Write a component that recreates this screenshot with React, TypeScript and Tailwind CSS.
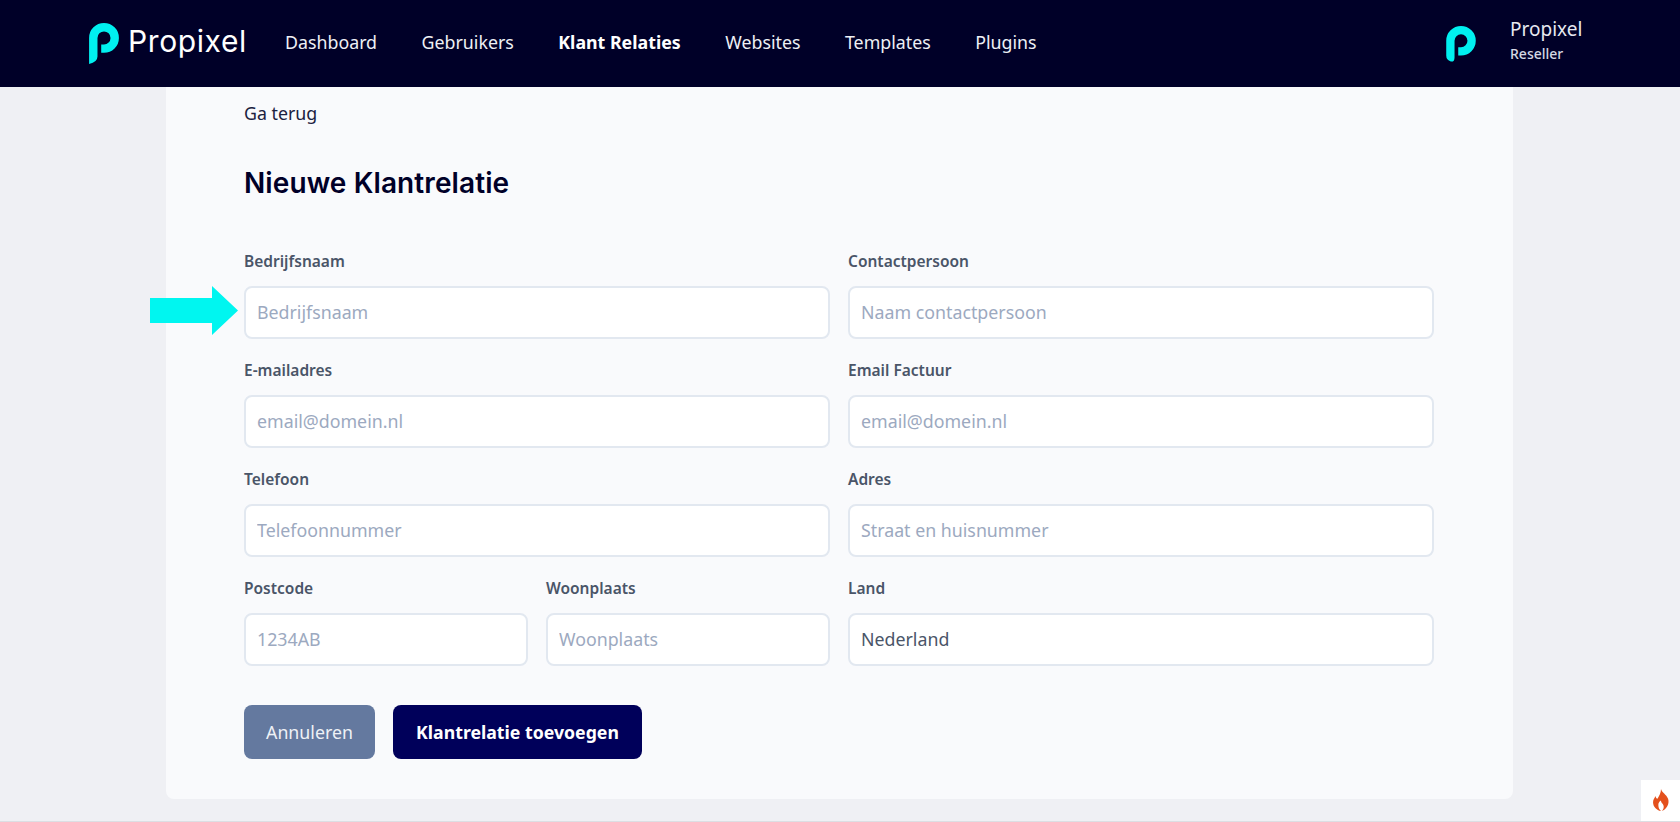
const Logo = () => (
  <svg viewBox="0 0 32 44" className="w-[30px] h-[41px] shrink-0">
    <path fill="#00f0f0" d="M0 16A16 16 0 1 1 16 32H13V23H16A7 7 0 1 0 9 16V36Q9 42 0 44Z" />
  </svg>
);

const SmallLogo = () => (
  <svg viewBox="0 0 32 39" className="w-[30px] h-[36px] shrink-0">
    <path fill="#00f0f0" d="M0 16A16 16 0 1 1 16 32H13V23H16A7 7 0 1 0 9 16V34Q9 39 5 38.500Q0 37 0 32Z" />
  </svg>
);

const inputClass =
  "block w-full h-[53px] px-[11px] pb-[2px] rounded-lg border-2 border-[#e2e8f0] bg-white text-[17.800px] text-[#4a5568] placeholder:text-[#9ca9c0] outline-none";

function Field({ label, placeholder, value }: { label: string; placeholder?: string; value?: string }) {
  return (
    <div className="mb-[4px]">
      <label className="block mb-[13px] h-[24px] leading-[24px] text-[15.500px] font-semibold text-[#4a5568]">{label}</label>
      <input className={inputClass} placeholder={placeholder} defaultValue={value} />
    </div>
  );
}

export default function App() {
  const links = ["Dashboard", "Gebruikers", "Klant Relaties", "Websites", "Templates", "Plugins"];

  return (
    <div className="h-[822px] overflow-hidden relative flex flex-col bg-[#eff0f4] border-b border-[#dcdee3] font-['Noto_Sans',sans-serif]">
      <nav className="h-[87px] shrink-0 bg-[#000028] flex items-center pl-[89px] pr-[96px]">
        <div className="flex items-center w-[196px] gap-[9px]">
          <Logo />
          <span className="text-[30px] tracking-[0.6px] text-white font-normal font-['Inter',sans-serif] leading-none -mt-[6px]">Propixel</span>
        </div>
        <div className="flex items-center gap-[44.500px] text-[17.800px] text-[#eef0f5] mb-[2px]">
          {links.map(l => (
            <a key={l} className={l === "Klant Relaties" ? "font-bold text-white" : ""}>{l}</a>
          ))}
        </div>
        <div className="ml-auto flex items-center">
          <SmallLogo />
          <div className="ml-[34px] w-[74px] mb-[9px]">
            <div className="text-[19px] leading-[28px] text-[#e6e8f0]">Propixel</div>
            <div className="text-[14px] leading-[21px] font-medium text-[#d5d8e3]">Reseller</div>
          </div>
        </div>
      </nav>

      <main className="ml-[166px] mr-[167px] h-[712px] shrink-0 bg-[#f9fafc] rounded-b-lg pl-[78px] pr-[79px]">
        <a className="block mt-[14px] leading-[24px] text-[17.800px] text-[#1b2140]">Ga terug</a>
        <h1 className="mt-[40px] mb-[48px] text-[28px] leading-[36px] font-semibold font-['Inter',sans-serif] tracking-[0.1px] text-[#000028]">Nieuwe Klantrelatie</h1>

        <div className="relative grid grid-cols-2 gap-x-[18px] gap-y-[15px]">
          <svg viewBox="0 0 88 49" className="absolute left-[-94px] top-[37px] w-[88px] h-[49px]">
            <path fill="#00f6f0" d="M0 12H62V0L88 24.500 62 49V37H0z" />
          </svg>
          <Field label="Bedrijfsnaam" placeholder="Bedrijfsnaam" />
          <Field label="Contactpersoon" placeholder="Naam contactpersoon" />
          <Field label="E-mailadres" placeholder="email@domein.nl" />
          <Field label="Email Factuur" placeholder="email@domein.nl" />
          <Field label="Telefoon" placeholder="Telefoonnummer" />
          <Field label="Adres" placeholder="Straat en huisnummer" />
          <div className="grid grid-cols-2 gap-x-[18px]">
            <Field label="Postcode" placeholder="1234AB" />
            <Field label="Woonplaats" placeholder="Woonplaats" />
          </div>
          <Field label="Land" value="Nederland" />
        </div>

        <div className="mt-[35px] flex gap-[18px]">
          <button className="h-[54px] w-[131px] rounded-lg bg-[#64799f] text-[17.800px] text-[#eef1f6]">Annuleren</button>
          <button className="h-[54px] w-[249px] rounded-lg bg-[#00005a] text-[17.700px] font-bold text-white">Klantrelatie toevoegen</button>
        </div>
      </main>

      <div className="absolute right-0 bottom-0 w-[39px] h-[41px] bg-white flex items-center justify-center">
        <svg viewBox="0 0 20 26" className="w-[18px] h-[23px]">
          <path
            fill="#e4501c"
            fillRule="evenodd"
            d="M10 0c1 4 6 6 8 11 2 6-2 12-7 14 2-2 3-5 1-8-1-1-2-2-2-4-2 1-3 3-3 5 0 3 1 5 3 7C5 24 1 20 1 15c0-3 2-5 3-7 0 2 1 3 2 3 2-3 4-7 4-11z"
          />
        </svg>
      </div>
    </div>
  );
}
